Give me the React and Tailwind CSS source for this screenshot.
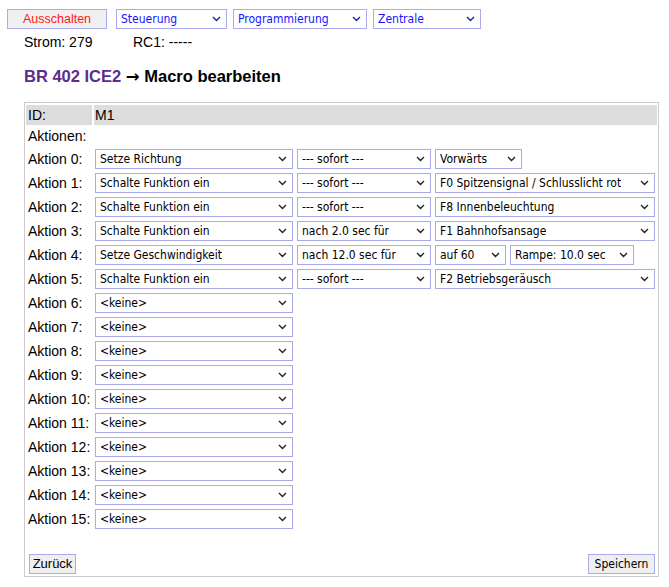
import React from "react";

const selFont = "font-['DejaVu_Sans_Condensed','DejaVu_Sans',sans-serif] font-stretch-condensed";

function Chevron({ color = "#222" }) {
  return (
    <svg width="9" height="6" viewBox="0 0 9 6" className="shrink-0">
      <polyline points="1,1 4.5,4.5 8,1" fill="none" stroke={color} strokeWidth="1.4" />
    </svg>
  );
}

function Select({ value, w, blue }) {
  return (
    <div
      className={`${w} h-[20px] shrink-0 flex items-center justify-between border border-[#aaaaee] bg-white pl-[4px] pr-[5px] text-[12px] ${selFont} ${blue ? "text-[#1414ff]" : "text-black"}`}
    >
      <span className="whitespace-nowrap overflow-hidden">{value}</span>
      <Chevron color={blue ? "#20209a" : "#222"} />
    </div>
  );
}

const actions = [
  ["Setze Richtung", "--- sofort ---", [["Vorwärts", "w-[87px]"]]],
  ["Schalte Funktion ein", "--- sofort ---", [["F0 Spitzensignal / Schlusslicht rot", "w-[220px]"]]],
  ["Schalte Funktion ein", "--- sofort ---", [["F8 Innenbeleuchtung", "w-[220px]"]]],
  ["Schalte Funktion ein", "nach 2.0 sec für", [["F1 Bahnhofsansage", "w-[220px]"]]],
  ["Setze Geschwindigkeit", "nach 12.0 sec für", [["auf 60", "w-[71px]"], ["Rampe: 10.0 sec", "w-[124px]"]]],
  ["Schalte Funktion ein", "--- sofort ---", [["F2 Betriebsgeräusch", "w-[220px]"]]],
];

export default function App() {
  const rows = [];
  for (let i = 0; i < 16; i++) rows.push(actions[i] || ["<keine>", null, []]);

  return (
    <div className="w-[669px] h-[587px] bg-white text-black font-['Liberation_Sans',Arial,sans-serif] overflow-hidden">
      <div className="flex items-center pt-[9px] pl-[7px]">
        <div className="w-[100px] h-[20px] flex items-center justify-center border border-[#aaaaee] bg-[#f0f0f0] text-[#ff1a1a] text-[12.5px]">
          Ausschalten
        </div>
        <div className="ml-[9px]"><Select value="Steuerung" w="w-[111px]" blue /></div>
        <div className="ml-[6px]"><Select value="Programmierung" w="w-[134px]" blue /></div>
        <div className="ml-[6px]"><Select value="Zentrale" w="w-[108px]" blue /></div>
      </div>

      <div className="flex mt-[5px] pl-[24px] text-[14px] leading-4">
        <span className="w-[109px]">Strom: 279</span>
        <span>RC1: -----</span>
      </div>

      <h1 className="mt-[16px] h-[20px] pl-[24px] text-[16.5px] leading-5 font-bold">
        <span className="text-[#5b2d8e]">BR 402 ICE2</span>{" "}
        <span className="font-['DejaVu_Sans',sans-serif] leading-none">→</span> Macro bearbeiten
      </h1>

      <div className="mt-[16px] ml-[24px] w-[635px] border border-[#cccccc] pt-[2px] px-[1px] pb-[1px] text-[14px] flex flex-col gap-[2px]">
        <div className="flex gap-[2px] h-[20px]">
          <div className="w-[66px] bg-[#dddddd] pl-[2px] flex items-center">ID:</div>
          <div className="flex-1 bg-[#dddddd] pl-[1px] flex items-center">M1</div>
        </div>
        <div className="flex h-[19px] items-center pl-[2px]">Aktionen:</div>
        {rows.map(([a, b, rest], i) => (
          <div key={i} className="flex gap-[2px] h-[22px]">
            <div className="w-[66px] pl-[2px] flex items-center">Aktion {i}:</div>
            <div className="flex gap-[4px] py-[1px] pl-[1px]">
              <Select value={a} w="w-[198px]" />
              {b && <Select value={b} w="w-[134px]" />}
              {rest.map(([v, w], j) => (
                <Select key={j} value={v} w={w} />
              ))}
            </div>
          </div>
        ))}
        <div className="h-[19px]" />
        <div className="flex justify-between items-center h-[22px] pl-[3px] pr-[2px]">
          <div className="w-[47px] h-[20px] flex items-center justify-center border border-[#aaaaee] bg-[#efefef] text-[13px]">
            Zurück
          </div>
          <div className={`w-[67px] h-[20px] flex items-center justify-center border border-[#aaaaee] bg-[#efefef] text-[12px] ${selFont}`}>
            Speichern
          </div>
        </div>
      </div>
    </div>
  );
}
